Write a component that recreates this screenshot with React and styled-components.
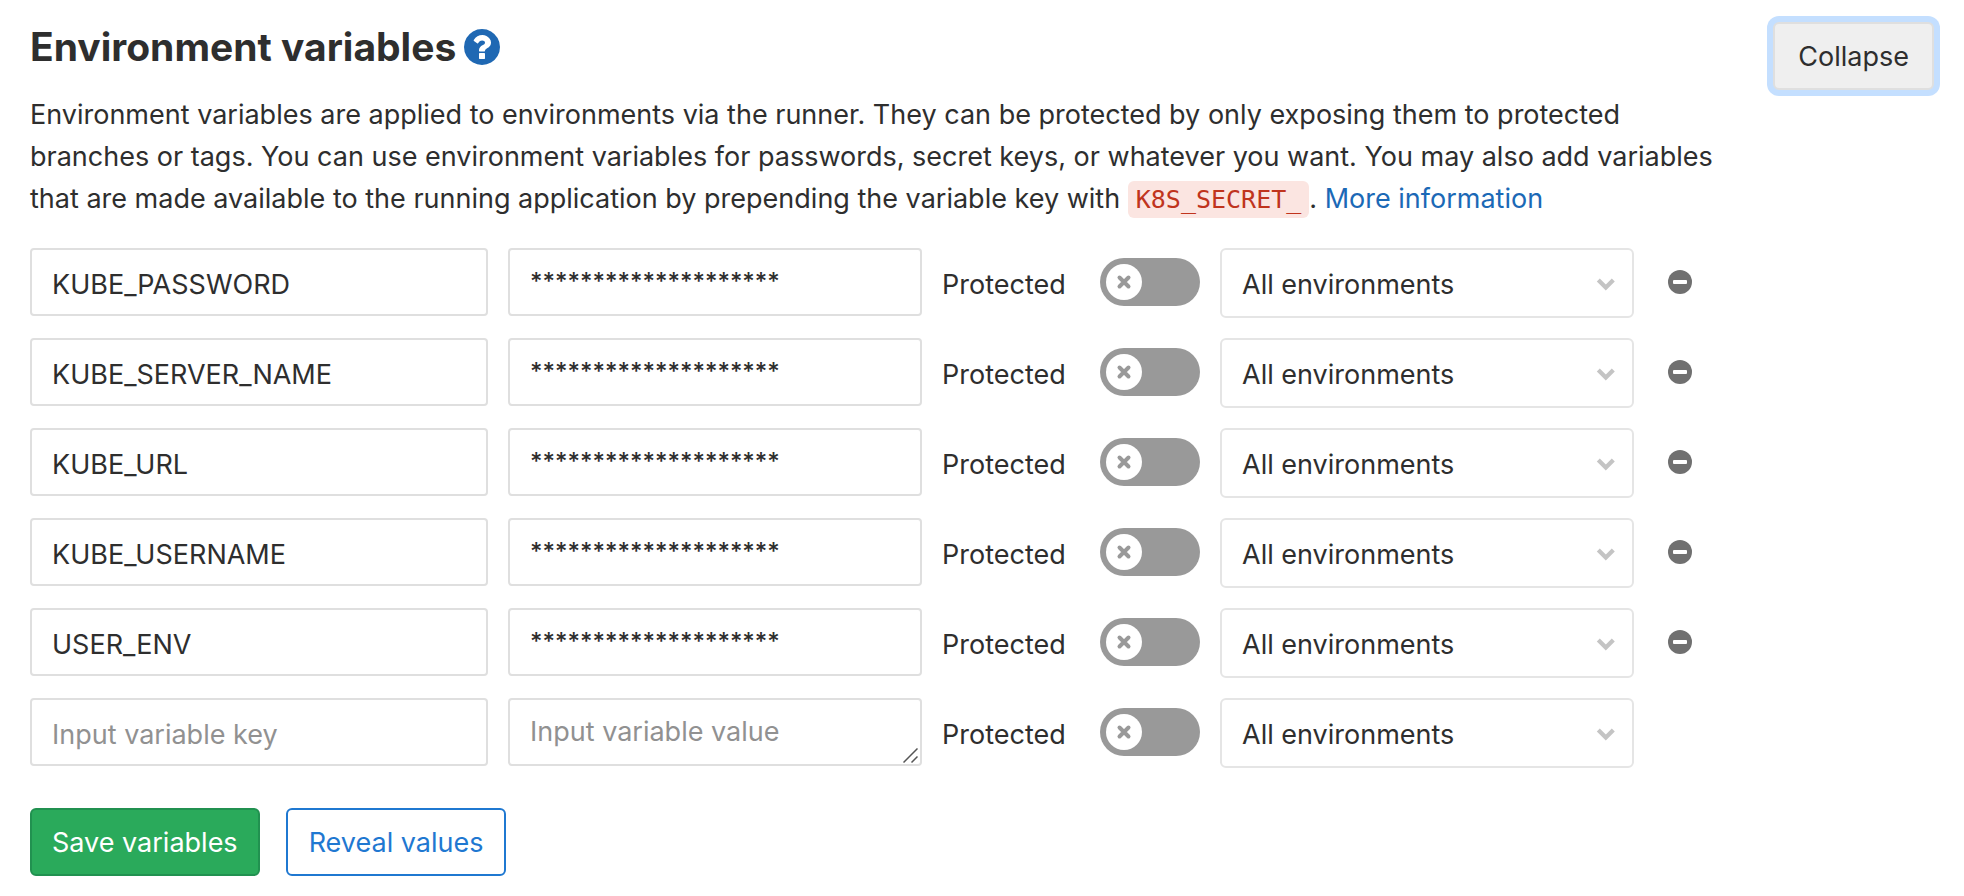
import React, { useId, useState } from "react";
import styled, { createGlobalStyle } from "styled-components";

const GlobalStyle = createGlobalStyle`
  *, *::before, *::after { box-sizing: border-box; }
  body {
    margin: 0;
    background: #fff;
    color: #2e2e2e;
    font-family: Inter, "Liberation Sans", sans-serif;
    font-size: 27px;
    line-height: 42px;
  }
  button, input, textarea, select { font: inherit; color: inherit; }
`;

const Section = styled.section`
  padding: 22px 30px 20px;
`;

const Header = styled.header`
  display: flex;
  align-items: flex-start;
  justify-content: space-between;
  gap: 40px;
`;

const Title = styled.h4`
  display: flex;
  align-items: center;
  gap: 8px;
  margin: 0 0 22px;
  font-size: 39px;
  line-height: 50px;
  font-weight: 700;
`;

const HelpLink = styled.a`
  display: flex;
  color: #1f68b3;
`;

const Description = styled.p`
  margin: 0;
`;

const Code = styled.code`
  padding: 4px 8px;
  border-radius: 6px;
  background: #fbe5e1;
  color: #c0341d;
  font-family: "DejaVu Sans Mono", monospace;
  font-size: 25px;
`;

const InfoLink = styled.a`
  color: #1b69b6;
  text-decoration: none;
`;

const palette = {
  default: { bg: "#efefef", border: "#dfdfdf", text: "#2e2e2e", padding: "2px 23px 0" },
  success: { bg: "#2aaa5b", border: "#219150", text: "#fff", padding: "2px 20px 0" },
  info: { bg: "#fff", border: "#1f78d1", text: "#1f78d1", padding: "2px 21px 0" },
};

const Button = styled.button`
  flex: none;
  height: 68px;
  padding: ${(p) => palette[p.$variant].padding};
  border: 2px solid ${(p) => palette[p.$variant].border};
  border-radius: 6px;
  background: ${(p) => palette[p.$variant].bg};
  color: ${(p) => palette[p.$variant].text};
  box-shadow: ${(p) => (p.$focused ? "0 0 0 6px #c4dfff" : "none")};
  white-space: nowrap;
  cursor: pointer;
`;

const VariableList = styled.ul`
  display: flex;
  flex-direction: column;
  gap: 20px;
  margin: 27px 0 0;
  padding: 0 228px 0 0;
  list-style: none;
`;

const VariableRow = styled.li`
  display: grid;
  grid-template-columns: minmax(0, 458fr) minmax(0, 414fr) 258px minmax(0, 414fr) 52px;
  column-gap: 20px;
  align-items: start;
`;

const KeyInput = styled.input`
  width: 100%;
  height: 68px;
  padding: 4px 20px 0;
  border: 2px solid #dfdfdf;
  border-radius: 4px;
  background: #fff;
  &::placeholder { color: #919191; opacity: 1; }
`;

const ValueBox = styled.div`
  position: relative;
  display: flex;
`;

const ValueInput = styled.textarea`
  width: 100%;
  height: 68px;
  padding: 11px 20px;
  border: 2px solid #dfdfdf;
  border-radius: 4px;
  background: #fff;
  font-size: ${(p) => (p.$masked ? "24px" : "27px")};
  font-weight: ${(p) => (p.$masked ? 500 : 400)};
  overflow: hidden;
  resize: none;
  &::placeholder { color: #919191; opacity: 1; }
`;

const ResizeGrip = styled.svg`
  position: absolute;
  right: 4px;
  bottom: 3px;
  pointer-events: none;
`;

const ProtectedField = styled.div`
  display: flex;
  align-items: center;
  justify-content: space-between;
  height: 68px;
`;

const ProtectedLabel = styled.label`
  padding-top: 5px;
`;

const Toggle = styled.span`
  position: relative;
  display: flex;
`;

const ToggleInput = styled.input`
  appearance: none;
  width: 100px;
  height: 48px;
  margin: 0;
  border-radius: 24px;
  background: ${(p) => (p.checked ? "#1f78d1" : "#999")};
  cursor: pointer;
`;

const Knob = styled.svg`
  position: absolute;
  top: 6px;
  left: ${(p) => (p.$on ? "58px" : "6px")};
  pointer-events: none;
`;

const SelectBox = styled.div`
  position: relative;
`;

const Select = styled.select`
  appearance: none;
  display: block;
  width: 100%;
  height: 70px;
  padding: 4px 56px 0 20px;
  border: 2px solid #e5e5e5;
  border-radius: 6px;
  background: #fff;
`;

const Chevron = styled.svg`
  position: absolute;
  top: 28px;
  right: 17px;
  pointer-events: none;
`;

const RemoveButton = styled.button`
  display: flex;
  align-items: center;
  justify-content: center;
  height: 68px;
  padding: 0;
  border: 0;
  background: transparent;
  color: #707070;
  cursor: pointer;
`;

const Actions = styled.div`
  display: flex;
  gap: 26px;
  margin-top: 40px;
`;

const MASK = "*".repeat(20);
const KEYS = ["KUBE_PASSWORD", "KUBE_SERVER_NAME", "KUBE_URL", "KUBE_USERNAME", "USER_ENV"];

function HelpIcon() {
  return (
    <svg width="36" height="36" viewBox="128 128 1536 1536" aria-hidden="true">
      <path
        fill="currentColor"
        d="M1024 1376v-192q0-14-9-23t-23-9h-192q-14 0-23 9t-9 23v192q0 14 9 23t23 9h192q14 0 23-9t9-23zm256-672q0-88-55.500-163t-138.500-116-170-41q-243 0-371 213-15 24 8 42l132 100q7 6 19 6 16 0 25-12 53-68 86-92 34-24 86-24 48 0 85.500 26t37.500 59q0 38-20 61t-68 45q-63 28-115.500 86.500t-52.500 125.500v36q0 14 9 23t23 9h192q14 0 23-9t9-23q0-19 21.500-49.500t54.500-49.500q32-18 49-28.500t46-35 44.500-48 28-60.500 12.500-81zm384 192q0 209-103 385.500t-279.500 279.500-385.500 103-385.500-103-279.500-279.500-103-385.500 103-385.500 279.500-279.500 385.500-103 385.500 103 279.500 279.500 103 385.500z"
      />
    </svg>
  );
}

function Variable({ name }) {
  const id = useId();
  const [on, setOn] = useState(false);
  return (
    <VariableRow>
      <KeyInput aria-label="Variable key" defaultValue={name} placeholder="Input variable key" />
      <ValueBox>
        <ValueInput
          aria-label="Variable value"
          rows={1}
          readOnly={Boolean(name)}
          $masked={Boolean(name)}
          defaultValue={name ? MASK : ""}
          placeholder="Input variable value"
        />
        {!name && (
          <ResizeGrip width="15" height="15" viewBox="0 0 15 15" aria-hidden="true">
            <path d="M0.500 14.500 14.500 0.500M8.500 14.500 14.500 8.500" stroke="#555" strokeWidth="1.500" />
          </ResizeGrip>
        )}
      </ValueBox>
      <ProtectedField>
        <ProtectedLabel htmlFor={id}>Protected</ProtectedLabel>
        <Toggle>
          <ToggleInput id={id} type="checkbox" checked={on} onChange={(e) => setOn(e.target.checked)} />
          <Knob $on={on} width="36" height="36" viewBox="0 0 36 36" aria-hidden="true">
            <circle cx="18" cy="18" r="18" fill="#fff" />
            <path d="M13.500 13.500 22.500 22.500M22.500 13.500 13.500 22.500" stroke="#999" strokeWidth="4" strokeLinecap="round" />
          </Knob>
        </Toggle>
      </ProtectedField>
      <SelectBox>
        <Select aria-label="Environment scope">
          <option>All environments</option>
        </Select>
        <Chevron width="22" height="18" viewBox="0 0 22 18" aria-hidden="true">
          <path d="M3.300 4 10.800 11.600 18.300 4" fill="none" stroke="#c4c4c4" strokeWidth="4.200" />
        </Chevron>
      </SelectBox>
      {name && (
        <RemoveButton type="button" aria-label="Remove variable">
          <svg width="24" height="24" viewBox="0 0 24 24" aria-hidden="true">
            <circle cx="12" cy="12" r="12" fill="currentColor" />
            <rect x="5" y="10" width="14" height="4" rx="1" fill="#fff" />
          </svg>
        </RemoveButton>
      )}
    </VariableRow>
  );
}

export default function App() {
  return (
    <>
      <GlobalStyle />
      <Section>
        <Header>
          <div>
            <Title>
              Environment variables
              <HelpLink href="#help" aria-label="Help">
                <HelpIcon />
              </HelpLink>
            </Title>
            <Description>
              Environment variables are applied to environments via the runner. They can be protected by only
              exposing them to protected branches or tags. You can use environment variables for passwords,
              secret keys, or whatever you want. You may also add variables that are made available to the
              running application by prepending the variable key with <Code>K8S_SECRET_</Code>.{" "}
              <InfoLink href="#more">More information</InfoLink>
            </Description>
          </div>
          <Button type="button" $variant="default" $focused>
            Collapse
          </Button>
        </Header>
        <VariableList>
          {KEYS.map((key) => (
            <Variable key={key} name={key} />
          ))}
          <Variable name="" />
        </VariableList>
        <Actions>
          <Button type="button" $variant="success">Save variables</Button>
          <Button type="button" $variant="info">Reveal values</Button>
        </Actions>
      </Section>
    </>
  );
}
